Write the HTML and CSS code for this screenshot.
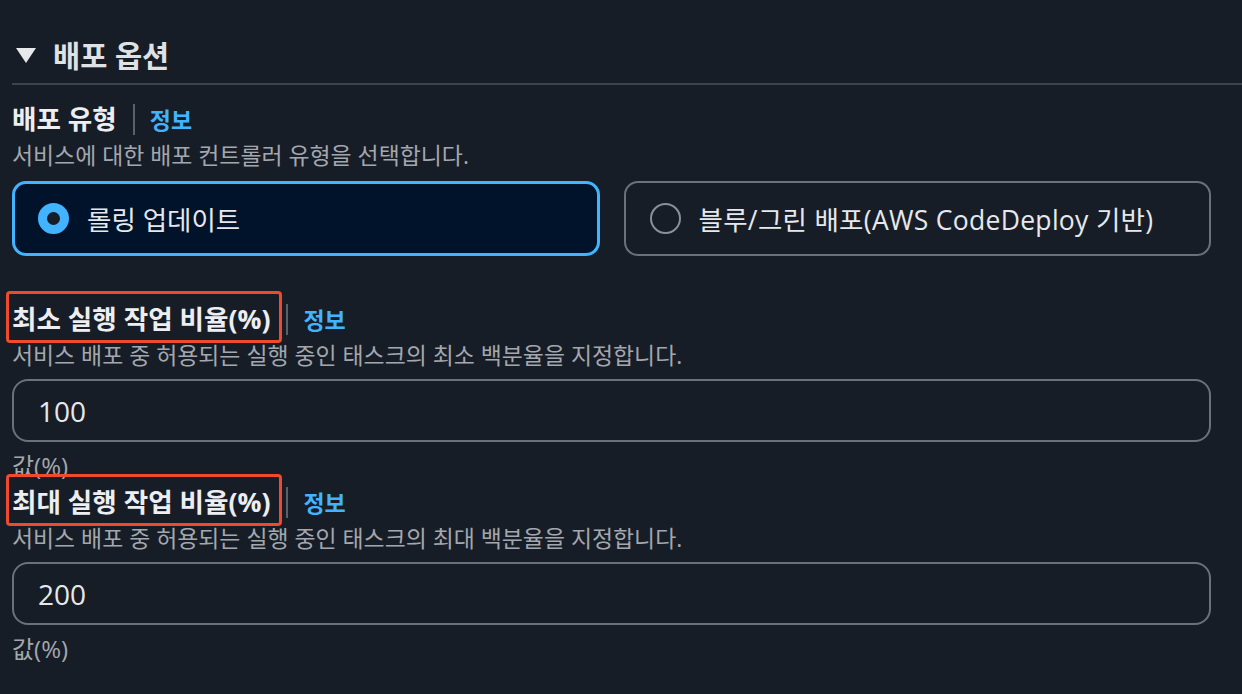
FILE: index.html
```html
<!DOCTYPE html>
<html lang="ko">
<head>
  <meta charset="UTF-8" />
  <meta name="viewport" content="width=device-width, initial-scale=1.0"/>
  <title>배포 옵션</title>
  <link rel="stylesheet" href="styles.css">
</head>
<body>
  <section class="panel">
    <div class="panel-head">
      <span class="caret"></span>
      <h2>배포 옵션</h2>
    </div>

    <div class="panel-body">
      <div class="field">
        <div class="label-row">
          <span class="label">배포 유형</span>
          <span class="sep"></span>
          <a class="info" href="#">정보</a>
        </div>
        <div class="desc">서비스에 대한 배포 컨트롤러 유형을 선택합니다.</div>
        <div class="tiles">
          <label class="tile selected">
            <span class="radio"></span>
            <span>롤링 업데이트</span>
          </label>
          <label class="tile">
            <span class="radio"></span>
            <span class="wide">블루/그린 배포(AWS CodeDeploy 기반)</span>
          </label>
        </div>
      </div>

      <div class="field gap-lg">
        <div class="label-row">
          <span class="label mark">최소 실행 작업 비율(%)</span>
          <span class="sep"></span>
          <a class="info" href="#">정보</a>
        </div>
        <div class="desc">서비스 배포 중 허용되는 실행 중인 태스크의 최소 백분율을 지정합니다.</div>
        <div class="input">100</div>
        <div class="hint">값(%)</div>
      </div>

      <div class="field gap-sm">
        <div class="label-row">
          <span class="label mark">최대 실행 작업 비율(%)</span>
          <span class="sep"></span>
          <a class="info" href="#">정보</a>
        </div>
        <div class="desc">서비스 배포 중 허용되는 실행 중인 태스크의 최대 백분율을 지정합니다.</div>
        <div class="input">200</div>
        <div class="hint">값(%)</div>
      </div>
    </div>
  </section>
</body>
</html>
```

FILE: styles.css
```css
* { margin: 0; padding: 0; box-sizing: border-box; }
html, body { height: 100%; }
body {
  background: #171d26;
  color: #e6e8ec;
  font-family: "Open Sans", "Noto Sans CJK KR", sans-serif;
  overflow: hidden;
}

.panel { padding-left: 12px; }

.panel-head {
  display: flex; align-items: center; gap: 17px;
  height: 85px; padding-top: 28px; padding-left: 4px;
  border-bottom: 2px solid #3e444d;
}
.caret {
  width: 0; height: 0;
  border-left: 10px solid transparent; border-right: 10px solid transparent;
  border-top: 15px solid #e6e8ec;
}
.panel-head h2 { font-size: 29.5px; font-weight: 700; line-height: 40px; color: #dfe1e5; }

.panel-body { padding-right: 31px; padding-top: 18px; }

.field { display: flex; flex-direction: column; }
.gap-lg { margin-top: 47px; }
.gap-sm { margin-top: 6px; }

.label-row { display: flex; align-items: center; height: 32px; }
.label { font-size: 26.6px; font-weight: 700; line-height: 32px; color: #eceef1; }
.mark {
  border: 3px solid #ee4a2b; border-radius: 4px;
  padding: 9px 9px 5px 3px;
  margin: -12px -12px -8px -6px;
}
.sep { width: 2px; height: 31px; background: #5a606a; margin: 0 15px 0 16px; }
.info { font-size: 23px; font-weight: 700; color: #42b4ff; text-decoration: none; }

.desc { font-size: 22.9px; line-height: 28px; margin-top: 7px; color: #a3a7ae; }
.hint { font-size: 24px; line-height: 28px; margin-top: 10px; color: #a3a7ae; }

.tiles {
  display: grid; grid-template-columns: 1fr 1fr; gap: 24px;
  margin-top: 11px;
}
.tile {
  display: flex; align-items: center; gap: 18px;
  height: 75px; padding-left: 24px;
  border: 2px solid #6c7078; border-radius: 14px;
  font-size: 26.5px; color: #e6e8ec;
}
.tile .wide { letter-spacing: 0.3px; }
.tile.selected { background: #00132a; border: 3px solid #42b4ff; padding-left: 23px; }
.radio {
  width: 31px; height: 31px; border-radius: 50%;
  border: 2px solid #8c8f96; flex: none;
}
.tile.selected .radio { border: 9px solid #42b4ff; background: #171d26; }

.input {
  height: 63px; margin-top: 9px;
  display: flex; align-items: center; padding-left: 24px;
  border: 2px solid #6c7078; border-radius: 16px;
  font-size: 28px; color: #e6e8ec;
}
```
